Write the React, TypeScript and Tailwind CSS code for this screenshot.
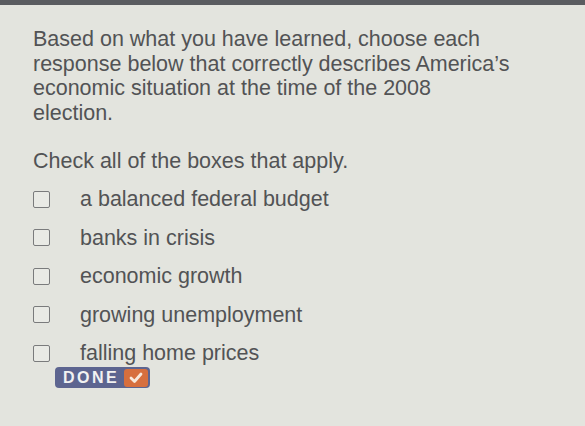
const options = [
  'a balanced federal budget',
  'banks in crisis',
  'economic growth',
  'growing unemployment',
  'falling home prices',
]

export default function App() {
  return (
    <div className="w-[585px] h-[426px] overflow-hidden bg-[#e3e4de] font-['Liberation_Sans',Arial,sans-serif] text-[#525355]">
      <div className="h-[5px] bg-[#5a5c60]" />
      <div className="pl-[33px] pt-[22px]">
        <p className="text-[21.5px] leading-[24.5px]">
          Based on what you have learned, choose each
          <br />
          response below that correctly describes America’s
          <br />
          economic situation at the time of the 2008
          <br />
          election.
        </p>
        <p className="mt-[24px] text-[21.5px] leading-[24px]">Check all of the boxes that apply.</p>
        <div className="mt-[14px] flex flex-col gap-[14.5px]">
          {options.map((o) => (
            <label key={o} className="flex items-center h-[24px]">
              <span className="w-[17px] h-[17px] border-[1.5px] border-[#7a7b7c] rounded-[2px] bg-[#e9eae5]" />
              <span className="ml-[30px] text-[21.5px] leading-[24px]">{o}</span>
            </label>
          ))}
        </div>
        <button className="mt-[2px] ml-[22px] flex items-center h-[21px] rounded-[4px] bg-[#5d6590] pl-[8px] pr-[2px] text-[#f2f2f2] font-bold text-[16px] tracking-[2.5px]">
          DONE
          <span className="ml-[5px] w-[24px] h-[18px] rounded-[3px] bg-[#d76f3e] flex items-center justify-center">
            <svg width="14" height="12" viewBox="0 0 14 12" fill="none">
              <path d="M2 6 L5.5 9.5 L12 2" stroke="#f8e9dc" strokeWidth="2.8" strokeLinecap="round" strokeLinejoin="round" />
            </svg>
          </span>
        </button>
      </div>
    </div>
  )
}
